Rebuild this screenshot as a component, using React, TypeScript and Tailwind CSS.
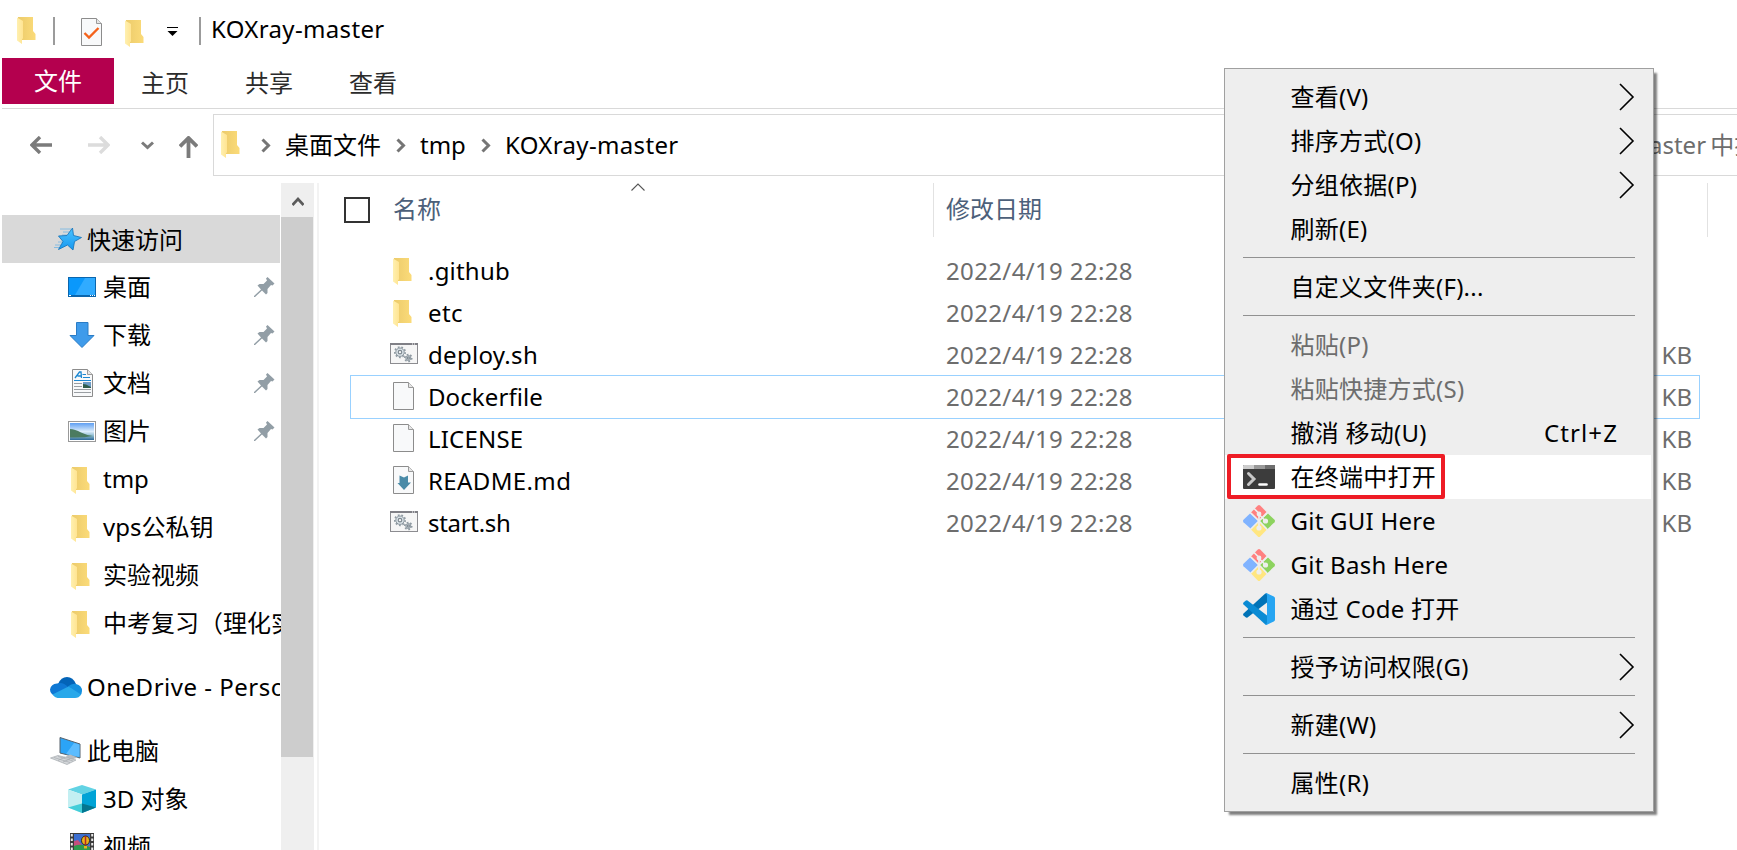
import React from "react";

const FONT = "font-['Noto_Sans','Noto_Sans_CJK_SC',sans-serif]";

function Folder() {
  return (
    <svg width="20" height="28" viewBox="0 0 20 28" className="block shrink-0">
      <defs>
        <linearGradient id="fb" x1="0" x2="1">
          <stop offset="0" stopColor="#eccb6b" />
          <stop offset="1" stopColor="#fbdb79" />
        </linearGradient>
        <linearGradient id="ff" x1="0" x2="1">
          <stop offset="0" stopColor="#fff0b0" />
          <stop offset="1" stopColor="#ffe492" />
        </linearGradient>
      </defs>
      <path d="M1 0H16V14L18.5 17V23H1Z" fill="url(#fb)" />
      <path d="M0 0.5L6 4V21.5L5 22V27L0 23.5Z" fill="url(#ff)" />
    </svg>
  );
}

function Page({ children }: { children?: React.ReactNode }) {
  return (
    <svg width="21" height="28" viewBox="0 0 21 28" className="block shrink-0">
      <path d="M0.5 0.5H15.5L20.5 5.5V27.5H0.5Z" fill="#f8f9fa" stroke="#8c8c8c" />
      <path d="M15.5 0.5V5.5H20.5" fill="#e6e6e6" stroke="#9a9a9a" />
      {children}
    </svg>
  );
}

function TaskPage() {
  return (
    <Page>
      <path d="M3.5 15L8 19.5L17.500 10" fill="none" stroke="#f4621b" strokeWidth="2.400" />
    </Page>
  );
}

function ReadmePage() {
  return (
    <Page>
      <path d="M6.5 9.5L11 11.5L15 9.5V16.5H18L11 24L4.5 17H6.5Z" fill="#4a8ba8" />
    </Page>
  );
}

function Gear({ x, y, r }: { x: number; y: number; r: number }) {
  return (
    <g transform={`translate(${x} ${y})`}>
      <circle r={r} fill="#dbe3e8" stroke="#8a959d" strokeWidth="1" />
      <circle r={r + 1} fill="none" stroke="#8f9aa2" strokeWidth="1.6" strokeDasharray="1.8 1.8" />
      <circle r={r * 0.42} fill="#f7f7f7" stroke="#7f8a92" strokeWidth="1.2" />
    </g>
  );
}

function Script() {
  return (
    <svg width="28" height="21" viewBox="0 0 28 21" className="block shrink-0">
      <rect x="0.5" y="0.5" width="27" height="20" fill="#f6f6f6" stroke="#8c8c90" />
      <path d="M0 1H28" stroke="#808086" strokeWidth="2" />
      <path d="M22 1H26" stroke="#fff" strokeWidth="1" strokeDasharray="1 1" />
      <Gear x={10} y={9.2} r={4.2} />
      <Gear x={18.3} y={15} r={2.5} />
    </svg>
  );
}

function Star() {
  return (
    <svg width="30" height="24" viewBox="0 0 30 24" className="block shrink-0">
      <defs>
        <linearGradient id="st" x1="0" y1="0" x2="0" y2="1">
          <stop offset="0" stopColor="#4cc3ff" />
          <stop offset="1" stopColor="#1698f0" />
        </linearGradient>
      </defs>
      <path d="M8 2H19M11 5H18M10 8H15M6 15H11M3 18H9M2 20.500H7" stroke="#7db9e2" strokeWidth="0.9" />
      <path d="M20.500 1L21.500 8.500L29.500 10.500L22.500 14.500L21 23L15.500 18L6.500 22.500L11 14.500L6.500 9L15 8.500Z" fill="url(#st)" stroke="#1a78bd" strokeWidth="0.9" />
    </svg>
  );
}

function Desktop() {
  return (
    <svg width="28" height="20" viewBox="0 0 28 20" className="block shrink-0">
      <rect width="28" height="20" fill="#0b66ad" />
      <rect x="1" y="1" width="26" height="17" fill="#0a98fb" />
      <path d="M17 1H27V18H7Z" fill="#30abff" />
      <path d="M1 18.500H3M22 18.500H23M24 18.500H25M26 18.500H27" stroke="#fff" />
    </svg>
  );
}

function Download() {
  return (
    <svg width="28" height="28" viewBox="0 0 28 28" className="block shrink-0">
      <path d="M8.500 1.500H20V14.500H26L14 26.500L2 14.500H8.500Z" fill="#3f9bea" stroke="#2a7cc6" />
    </svg>
  );
}

function DocIcon() {
  return (
    <Page>
      <path d="M3 9L7.500 3H9L9.500 9M5.500 7H9.500" fill="none" stroke="#1b87d1" strokeWidth="1.300" />
      <path d="M10.500 5.500H14M11 8.500H18M2 11.500H19" stroke="#1b87d1" />
      <path d="M2 14.500H10M2 17.500H10M2 20.500H19M2 23.500H19" stroke="#9a9ea2" />
      <rect x="11" y="13" width="8" height="6" fill="#6d9cc6" />
      <path d="M11 15L14 15.500L19 18V19H11Z" fill="#2f5d4c" />
    </Page>
  );
}

function Picture() {
  return (
    <svg width="28" height="21" viewBox="0 0 28 21" className="block shrink-0">
      <defs>
        <linearGradient id="sky" x1="0" y1="0" x2="0" y2="1">
          <stop offset="0" stopColor="#5f9ff2" />
          <stop offset="0.5" stopColor="#dcedfb" />
          <stop offset="0.75" stopColor="#8cbad0" />
          <stop offset="1" stopColor="#2b6796" />
        </linearGradient>
      </defs>
      <rect x="0.5" y="0.5" width="27" height="20" fill="#fff" stroke="#999" />
      <rect x="2" y="2" width="24" height="17" fill="url(#sky)" />
      <path d="M2 8Q7 8 13 11.500Q18 14 25 15Q15 17 2 16.500Z" fill="#4b7b60" />
    </svg>
  );
}

function Cloud() {
  return (
    <svg width="32" height="21" viewBox="0 0 32 21" className="block shrink-0">
      <path d="M8 7Q11 0 17 0Q23 0 26 7L18 12Z" fill="#0364b8" />
      <path d="M7 6.500Q13 4.500 18 10L6 19.500Q0 17 0 12.500Q1 7 7 6.500Z" fill="#0f78d4" />
      <path d="M18 9.500Q22 6 26 7Q32 8.500 32 14Q32 17 30 18.500Z" fill="#1490df" />
      <path d="M2.500 17.500L18.500 9.500L31 17.500Q29 21 25 21H7.500Q4.500 20.500 2.500 17.500Z" fill="#28a8ea" />
    </svg>
  );
}

function Computer() {
  return (
    <svg width="32" height="28" viewBox="0 0 32 28" className="block shrink-0">
      <path d="M10 0.500L30 7V21L10 16Z" fill="#2ba4f7" stroke="#56616b" />
      <path d="M24 6L29.500 7.500V20L16 17Z" fill="#5bbcff" />
      <path d="M15 20L20 17.500L28 20.500L22 22.500Z" fill="#b7bcc1" />
      <path d="M0.500 21L8 18.500L26 23L17 27.500Z" fill="#d4d7da" stroke="#a4a9ad" strokeWidth="0.7" />
      <path d="M4 20.500L20 25.500M8 19.500L23 24M8 23.500L15 20M13 25L20 22" stroke="#9da3a7" strokeWidth="0.6" />
    </svg>
  );
}

function Cube() {
  return (
    <svg width="28" height="28" viewBox="0 0 28 28" className="block shrink-0">
      <path d="M14 0L28 4.500L14 9.500L0 4.500Z" fill="#62d3e4" />
      <path d="M0 4.500L14 9.500V28L0 22.500Z" fill="#c3eff2" />
      <path d="M28 4.500L14 9.500V28L28 22.500Z" fill="#00a3d6" />
      <path d="M14 18.500L28 22.500L14 28Z" fill="#04768f" />
      <path d="M14 18.500L0 22.500L14 28Z" fill="#42ced9" />
    </svg>
  );
}

function Film() {
  return (
    <svg width="24" height="28" viewBox="0 0 24 28" className="block shrink-0">
      <rect width="24" height="28" fill="#3b3b3b" />
      <path d="M1.800 1V28M22.200 1V28" stroke="#e8e8e8" strokeWidth="2" strokeDasharray="2.500 2" />
      <rect x="4" y="1" width="16" height="16" fill="#3d6fd0" />
      <path d="M4 8L8 7L12 12L20 13V17H4Z" fill="#c54e7e" />
      <path d="M4 13Q11 10 20 14V17H4Z" fill="#2e9a4d" />
      <ellipse cx="15.500" cy="7.500" rx="4" ry="4.500" fill="#e9b21d" stroke="#352b13" />
      <path d="M15.500 3V12" stroke="#b32626" strokeWidth="1.500" />
      <rect x="14" y="13" width="3" height="2.500" fill="#e9b21d" />
    </svg>
  );
}

function Pin() {
  return (
    <svg width="21" height="21" viewBox="0 0 21 21" className="block shrink-0">
      <path d="M13.500 0L20.500 6.500L18.500 8.500L17 8L13.500 12L13.500 16L12 17.500L8 13.500L1 20H0V19L7 12.500L3.500 8.500L5.500 7H9.500L13 3.500L12 1.500Z" fill="#929ea6" />
    </svg>
  );
}

function Terminal() {
  return (
    <svg width="32" height="24" viewBox="0 0 32 24" className="block">
      <rect width="32" height="24" rx="1" fill="#3c3c3c" />
      <path d="M1 0H11V4H0V1Q0 0 1 0Z" fill="#ccc" />
      <path d="M11 0H22V4H11Z" fill="#999" />
      <path d="M22 0H31Q32 0 32 1V4H22Z" fill="#6e6e6e" />
      <path d="M5.500 8.500L11 14L5.500 19.500" fill="none" stroke="#c8c8c8" strokeWidth="3" strokeLinecap="round" />
      <path d="M16.500 19.500H23.500" stroke="#fff" strokeWidth="2.600" strokeLinecap="round" />
    </svg>
  );
}

function Git() {
  return (
    <svg width="32" height="32" viewBox="0 0 32 32" className="block">
      <path d="M14.800 0.500Q16 -0.500 17.200 0.500L23.500 7L16 15L8 7.500Z" fill="#ff8080" />
      <path d="M7 8.500L15 16L7.500 23.500L0.500 17.200Q-0.500 16 0.500 14.800Z" fill="#80b3ff" />
      <path d="M25 8.500L31.500 14.800Q32.500 16 31.500 17.200L24.500 24L17 16Z" fill="#8dd35f" />
      <path d="M16 16.500L23.500 25L17.200 31.500Q16 32.500 14.800 31.500L8 24.500Z" fill="#ffe680" />
      <path d="M11 3.500L16 8.500V23M16 9.500L22 15.500" fill="none" stroke="#eee" strokeWidth="1.700" />
      <circle cx="16" cy="9" r="2.400" fill="#eee" />
      <circle cx="22.500" cy="16" r="2.600" fill="#eee" />
      <circle cx="16" cy="23" r="2.600" fill="#eee" />
      <path d="M8 8L24 24M24 8L8 24" stroke="#eee" strokeWidth="1.200" />
    </svg>
  );
}

function Code() {
  return (
    <svg width="32" height="32" viewBox="0 0 32 32" className="block">
      <path d="M24 1L24 9.500L4.500 24.500Q3.500 25 2.600 24.300L0.500 22.400Q-0.300 21.500 0.500 20.600L22 0.800Q23 0 24 0.300Z" fill="#0073b7" />
      <path d="M24 31L24 22.500L4.500 7.500Q3.500 7 2.600 7.700L0.500 9.600Q-0.300 10.500 0.500 11.400L22 31.200Q23 32 24 31.700Z" fill="#0a8bd4" />
      <path d="M24 0.200L30.800 3.500Q32 4.200 32 5.500V26.500Q32 27.800 30.800 28.500L24 31.800Q23 32 22 31.200Q24 31.500 24 29.500V2.500Q24 0.600 22 0.800Q23 0 24 0.200Z" fill="#26a5f2" />
    </svg>
  );
}

function Crumb() {
  return (
    <svg width="10" height="15" viewBox="0 0 10 15" className="block">
      <path d="M1.500 1.500L7.500 7.500L1.500 13.500" fill="none" stroke="#757575" strokeWidth="3" />
    </svg>
  );
}

const side = [
  { icon: <Desktop />, label: "桌面", pin: true },
  { icon: <Download />, label: "下载", pin: true },
  { icon: <DocIcon />, label: "文档", pin: true },
  { icon: <Picture />, label: "图片", pin: true },
  { icon: <Folder />, label: "tmp", folder: true },
  { icon: <Folder />, label: "vps公私钥", folder: true },
  { icon: <Folder />, label: "实验视频", folder: true },
  { icon: <Folder />, label: "中考复习（理化实", folder: true },
];

function Child({ icon, label, pin, folder }: { icon: React.ReactNode; label: string; pin?: boolean; folder?: boolean }) {
  return (
    <div className="flex h-12 shrink-0 items-center pl-[66px]">
      <div className={folder ? "w-7 shrink-0 pl-[3px] pt-[3px]" : "flex w-7 shrink-0 justify-center"}>{icon}</div>
      <span className="ml-[7px] flex-1 whitespace-nowrap">{label}</span>
      {pin && <div className="mr-[5px]"><Pin /></div>}
    </div>
  );
}

const files = [
  { icon: <Folder />, name: ".github", box: "pl-[3px] pt-[2px]", track: "tracking-[0.2px]" },
  { icon: <Folder />, name: "etc", box: "pl-[3px] pt-[2px]", track: "tracking-[0.4px]" },
  { icon: <Script />, name: "deploy.sh", box: "pb-[4px]", kb: true, track: "tracking-[0.3px]" },
  { icon: <Page />, name: "Dockerfile", box: "pl-[3px] pb-[2px]", kb: true, selected: true, track: "tracking-[0.1px]" },
  { icon: <Page />, name: "LICENSE", box: "pl-[3px] pb-[2px]", kb: true, track: "tracking-[0.2px]" },
  { icon: <ReadmePage />, name: "README.md", box: "pl-[3px] pb-[2px]", kb: true, track: "tracking-[0.38px]" },
  { icon: <Script />, name: "start.sh", box: "pb-[4px]", kb: true, track: "tracking-[-0.3px]" },
];

type Item = { label?: string; sub?: boolean; off?: boolean; key2?: string; icon?: React.ReactNode; hot?: boolean };
const menu: Item[] = [
  { label: "查看(V)", sub: true },
  { label: "排序方式(O)", sub: true },
  { label: "分组依据(P)", sub: true },
  { label: "刷新(E)" },
  {},
  { label: "自定义文件夹(F)..." },
  {},
  { label: "粘贴(P)", off: true },
  { label: "粘贴快捷方式(S)", off: true },
  { label: "撤消 移动(U)", key2: "Ctrl+Z" },
  { label: "在终端中打开", icon: <Terminal />, hot: true },
  { label: "Git GUI Here", icon: <Git /> },
  { label: "Git Bash Here", icon: <Git /> },
  { label: "通过 Code 打开", icon: <Code /> },
  {},
  { label: "授予访问权限(G)", sub: true },
  {},
  { label: "新建(W)", sub: true },
  {},
  { label: "属性(R)" },
];

function MenuRow({ item }: { item: Item }) {
  if (!item.label) {
    return <div className="h-[14px] pt-[6px] pr-[18px] pl-[18px]"><div className="h-px bg-[#919191]" /></div>;
  }
  return (
    <div className={`relative mr-[2px] flex h-11 items-center pl-[18px] pr-4 ${item.hot ? "bg-white" : ""} ${item.off ? "text-[#6d6d6d]" : "text-black"}`}>
      <div className="w-8 shrink-0">{item.icon}</div>
      <span className="ml-[15.5px] flex-1 whitespace-nowrap tracking-[0.25px]">{item.label}</span>
      {item.key2 && <span className="mr-[17px] tracking-[1.1px]">{item.key2}</span>}
      {item.sub && (
        <svg width="16" height="28" viewBox="0 0 16 28" className="block">
          <path d="M1 1L14 14L1 27" fill="none" stroke="#000" strokeWidth="1.600" />
        </svg>
      )}
      {item.hot && <div className="absolute -top-px left-[2px] h-[45px] w-[218px] rounded-[2px] border-4 border-[#ee1c25]" />}
    </div>
  );
}

export default function App() {
  return (
    <div className={`relative flex h-[850px] w-[1737px] flex-col overflow-hidden bg-white text-[24px] leading-[32px] text-black ${FONT}`}>
      <header className="flex h-[58px] shrink-0 items-start pl-[17px] pt-[17px]">
        <Folder />
        <div className="ml-4 h-7 w-[2px] bg-[#9b9b9b]" />
        <div className="ml-[26px] pt-px"><TaskPage /></div>
        <div className="ml-[23px] pt-[3px]"><Folder /></div>
        <svg width="11" height="10" viewBox="0 0 11 10" className="ml-[22px] mt-[10px] block">
          <path d="M0 0.500H11" stroke="#000" />
          <path d="M0.500 4H10.500L5.500 9Z" />
        </svg>
        <div className="ml-[21px] h-7 w-[2px] bg-[#9b9b9b]" />
        <span className="-mt-[4px] ml-[10px] tracking-[0.35px]">KOXray-master</span>
      </header>

      <nav className="ml-[2px] flex h-[51px] shrink-0 items-start border-b border-[#d9d9d9] text-[#2b2b2b]">
        <div className="flex h-[46px] w-28 items-center justify-center bg-[#b4004e] text-white">文件</div>
        <span className="ml-[27px] pt-[9px]">主页</span>
        <span className="ml-14 pt-[9px]">共享</span>
        <span className="ml-14 pt-[9px]">查看</span>
      </nav>

      <div className="flex h-[74px] shrink-0 items-start pt-[5px]">
        <div className="flex h-[62px] w-[213px] items-center pl-[30px]">
          <svg width="22" height="18" viewBox="0 0 22 18"><path d="M22 9H2M10 1L2 9L10 17" fill="none" stroke="#7b7b7b" strokeWidth="3.400" /></svg>
          <svg width="22" height="18" viewBox="0 0 22 18" className="ml-9"><path d="M0 9H20M12 1L20 9L12 17" fill="none" stroke="#dcdcdc" strokeWidth="3.400" /></svg>
          <svg width="13" height="9" viewBox="0 0 13 9" className="ml-[31px]"><path d="M1 1.500L6.500 6.500L12 1.500" fill="none" stroke="#7b7b7b" strokeWidth="3" /></svg>
          <svg width="19" height="22" viewBox="0 0 19 22" className="ml-[25px] mt-1"><path d="M9.500 22V2M1 10.500L9.500 2L18 10.500" fill="none" stroke="#7b7b7b" strokeWidth="3.800" /></svg>
        </div>
        <div className="flex h-[62px] flex-1 items-center border border-r-0 border-[#d9d9d9] pl-[7px]">
          <Folder />
          <div className="ml-[20px]"><Crumb /></div>
          <span className="ml-[14px] w-24">桌面文件</span>
          <div className="ml-[15px]"><Crumb /></div>
          <span className="ml-[14px] w-[46px]">tmp</span>
          <div className="ml-[15px]"><Crumb /></div>
          <span className="ml-[14px] flex-1 tracking-[0.35px]">KOXray-master</span>
          <span className="w-[88px] overflow-hidden whitespace-nowrap text-[#6d6d6d] [word-spacing:-2px]">aster 中搜</span>
        </div>
      </div>

      <div className="flex min-h-0 flex-1">
        <aside className="flex w-[281px] flex-col overflow-hidden pt-8 pl-[2px] pr-px">
          <div className="flex h-12 shrink-0 items-center bg-[#d9d9d9] pl-[50px]">
            <Star />
            <span className="ml-[5px] pt-px">快速访问</span>
          </div>
          {side.map((s) => <Child key={s.label} {...s} />)}
          <div className="mt-4 flex h-12 w-[278px] shrink-0 items-center overflow-hidden pl-12">
            <Cloud />
            <span className="ml-[5px] whitespace-nowrap tracking-[0.5px]">OneDrive - Perso</span>
          </div>
          <div className="mt-4 flex h-12 shrink-0 items-center pl-12">
            <Computer />
            <span className="ml-[5px]">此电脑</span>
          </div>
          <Child icon={<Cube />} label="3D 对象" />
          <Child icon={<Film />} label="视频" />
        </aside>
        <div className="flex w-[33px] flex-col bg-[#efefef]">
          <div className="flex h-[34px] items-center justify-center pt-[3px]">
            <svg width="12" height="10" viewBox="0 0 12 10"><path d="M0.500 8L6 2L11.500 8" fill="none" stroke="#5b5b5b" strokeWidth="2.600" /></svg>
          </div>
          <div className="mr-px h-[540px] bg-[#cdcdcd]" />
        </div>
        <div className="ml-[3px] w-[2px] bg-[#f3f3f3]" />

        <main className="flex flex-1 flex-col">
          <div className="flex h-[54px] shrink-0 items-start pl-[25px] text-[#4c607a]">
            <div className="mt-[14px] size-[26px] border-2 border-[#333]" />
            <span className="ml-[23px] mt-[10px] w-[238px]">名称</span>
            <svg width="14" height="8" viewBox="0 0 14 8" className="block"><path d="M0.500 7.500L7 1L13.500 7.500" fill="none" stroke="#555" strokeWidth="1.100" /></svg>
            <div className="ml-[288px] h-[54px] w-px bg-[#e2e2e2]" />
            <span className="ml-[12px] mt-[10px] flex-1">修改日期</span>
            <div className="mr-[29px] h-[54px] w-px bg-[#e2e2e2]" />
          </div>
          <div className="ml-[31px] mt-[13px] flex w-[1350px] flex-col">
            {files.map((f) => (
              <div key={f.name} className={`flex items-center pl-10 ${f.selected ? "-my-px h-11 outline outline-1 -outline-offset-1 outline-[#99d1ff]" : "h-[42px]"}`}>
                <div className={`w-[38px] shrink-0 ${f.box}`}>{f.icon}</div>
                <span className={`w-[518px] ${f.track}`}>{f.name}</span>
                <span className="flex-1 tracking-[0.36px] text-[#6d6d6d]">2022/4/19 22:28</span>
                {f.kb && <span className="mr-[8px] text-[#6d6d6d]">KB</span>}
              </div>
            ))}
          </div>
        </main>
      </div>

      <div className="absolute left-[1224px] top-[68px] h-[744px] w-[430px] border border-[#a0a0a0] bg-[#eeeeee] pt-[6px] shadow-[4px_4px_2px_-1px_rgba(0,0,0,0.5)]">
        {menu.map((m, i) => <MenuRow key={i} item={m} />)}
      </div>
    </div>
  );
}
